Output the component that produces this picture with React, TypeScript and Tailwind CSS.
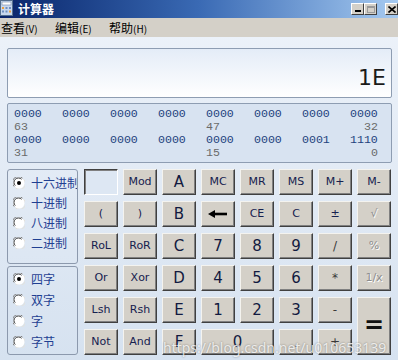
type Key = {
  label?: string;
  size?: "sm" | "lg" | "op";
  off?: boolean;
  span?: string;
  kind?: "blank" | "back";
};

const keys: Key[] = [
  { kind: "blank" },
  { label: "Mod" },
  { label: "A", size: "lg" },
  { label: "MC" },
  { label: "MR" },
  { label: "MS" },
  { label: "M+" },
  { label: "M-" },

  { label: "(" },
  { label: ")" },
  { label: "B", size: "lg" },
  { kind: "back" },
  { label: "CE" },
  { label: "C" },
  { label: "±" },
  { label: "√", off: true },

  { label: "RoL" },
  { label: "RoR" },
  { label: "C", size: "lg" },
  { label: "7", size: "lg" },
  { label: "8", size: "lg" },
  { label: "9", size: "lg" },
  { label: "/", size: "op" },
  { label: "%", off: true },

  { label: "Or" },
  { label: "Xor" },
  { label: "D", size: "lg" },
  { label: "4", size: "lg" },
  { label: "5", size: "lg" },
  { label: "6", size: "lg" },
  { label: "*", size: "op" },
  { label: "1/x", off: true },

  { label: "Lsh" },
  { label: "Rsh" },
  { label: "E", size: "lg" },
  { label: "1", size: "lg" },
  { label: "2", size: "lg" },
  { label: "3", size: "lg" },
  { label: "-", size: "op" },
  { label: "=", span: "row-span-2" },

  { label: "Not" },
  { label: "And" },
  { label: "F", size: "lg" },
  { label: "0", size: "lg", span: "col-span-2" },
  { label: ".", off: true, size: "lg" },
  { label: "+", size: "op" },
];

const bitRows = [
  { bits: ["0000", "0000", "0000", "0000", "0000", "0000", "0000", "0000"], hi: "63", mid: "47", lo: "32" },
  { bits: ["0000", "0000", "0000", "0000", "0000", "0000", "0001", "1110"], hi: "31", mid: "15", lo: "0" },
];

const Radio = ({ on }: { on?: boolean }) => (
  <svg width="12" height="12" viewBox="0 0 12 12" className="shrink-0">
    <circle cx="6" cy="6" r="5.5" fill="#ffffff" />
    <path d="M1.2 9.5 A5.2 5.2 0 0 1 9.5 1.2" stroke="#808080" strokeWidth="1" fill="none" />
    <path d="M2.3 8.6 A4 4 0 0 1 8.6 2.3" stroke="#404040" strokeWidth="1" fill="none" />
    <path d="M10.8 2.5 A5.2 5.2 0 0 1 2.5 10.8" stroke="#e4e1da" strokeWidth="1" fill="none" />
    {on && <circle cx="6" cy="6" r="2" fill="#000000" />}
  </svg>
);

const KeyButton = ({ k }: { k: Key }) => {
  if (k.kind === "blank") {
    return (
      <div className="border border-t-[#404040] border-l-[#404040] border-r-white border-b-white bg-[#dde7f3] shadow-[inset_1px_1px_0_#808080]" />
    );
  }
  let text = "text-[11px] text-[#16214f]";
  if (k.size === "lg") text = "text-[15px] text-[#121a40]";
  if (k.size === "op") text = "text-[12px] text-[#3a3a3a]";
  if (k.label === "=") text = "text-[24px] font-bold text-[#111111]";
  if (k.off) text = (k.size === "lg" ? "text-[15px]" : "text-[11px]") + " text-[#8e8e8e] [text-shadow:1px_1px_0_#ffffff]";
  return (
    <div
      className={
        "flex items-center justify-center bg-[#d4d0c8] border border-t-[#f4f3ef] border-l-[#f4f3ef] border-r-[#404040] border-b-[#404040] shadow-[inset_-1px_-1px_0_#808080] " +
        (k.span ?? "")
      }
    >
      {k.kind === "back" ? (
        <svg width="22" height="10" viewBox="0 0 22 10">
          <path d="M7 5 H20" stroke="#000" strokeWidth="2.6" />
          <path d="M1 5 L8 1 L8 9 Z" fill="#000" />
        </svg>
      ) : (
        <span className={text + (k.label === "=" ? " leading-none -mt-[2px]" : "")}>{k.label}</span>
      )}
    </div>
  );
};

const App = () => {
  return (
    <div className="relative w-[398px] h-[360px] overflow-hidden bg-gradient-to-b from-[#eef3fa] to-[#d6e2f0] font-['DejaVu_Sans',sans-serif]">
      {/* title bar */}
      <div className="h-[18px] flex items-center bg-gradient-to-r from-[#0a246a] via-[#3a6ab4] to-[#a6caf0]">
        <svg width="14" height="17" viewBox="0 0 14 17" className="self-start">
          <rect x="0.5" y="0.5" width="12" height="15" fill="#c8d8ee" stroke="#56708f" />
          <rect x="2" y="2" width="9" height="3" fill="#ffffff" stroke="#6f88a8" strokeWidth="0.6" />
          <rect x="2" y="7" width="2" height="2" fill="#e9a040" />
          <rect x="5.5" y="7" width="2" height="2" fill="#6f8fc0" />
          <rect x="9" y="7" width="2" height="2" fill="#6f8fc0" />
          <rect x="2" y="10.5" width="2" height="2" fill="#6f8fc0" />
          <rect x="5.5" y="10.5" width="2" height="2" fill="#6f8fc0" />
          <rect x="9" y="10.5" width="2" height="2" fill="#e9a040" />
        </svg>
        <span className="ml-[4px] text-white font-bold text-[12px] leading-none font-['Noto_Sans_CJK_SC',sans-serif]">计算器</span>
        <div className="ml-auto flex items-center self-start mt-[3px]">
          <div className="w-[13px] h-[12px] bg-[#d4d0c8] border border-t-white border-l-white border-r-[#404040] border-b-[#404040] flex items-end justify-center pb-[2px]">
            <div className="w-[6px] h-[2px] bg-black" />
          </div>
          <div className="w-[13px] h-[12px] bg-[#d4d0c8] border border-t-white border-l-white border-r-[#404040] border-b-[#404040] flex items-center justify-center">
            <div className="w-[8px] h-[7px] border border-[#9a9a9a] border-t-2" />
          </div>
          <div className="ml-[8px] w-[13px] h-[12px] bg-[#d4d0c8] border border-t-white border-l-white border-r-[#404040] border-b-[#404040] flex items-center justify-center">
            <svg width="8" height="7" viewBox="0 0 8 7">
              <path d="M0.5 0.5 L7.5 6.5 M7.5 0.5 L0.5 6.5" stroke="#000" strokeWidth="1.6" />
            </svg>
          </div>
        </div>
      </div>

      {/* menu bar */}
      <div className="h-[19px] bg-[#d4d0c8] flex items-center text-[12px] text-black font-['Noto_Sans_CJK_SC',sans-serif]">
        <span className="ml-[1px] w-[54px]">查看<span className="text-[10px]">(V)</span></span>
        <span className="w-[54px]">编辑<span className="text-[10px]">(E)</span></span>
        <span>帮助<span className="text-[10px]">(H)</span></span>
      </div>

      <div className="pl-[7px] pr-[6px] pt-[11px]">
        {/* display */}
        <div className="h-[50px] rounded-[2px] border border-[#8e9db2] bg-gradient-to-b from-[#e4ecf7] to-white flex items-end justify-end pr-[5px] pb-[8px]">
          <span className="text-[22px] leading-[22px] text-[#1a1a1a]">1E</span>
        </div>

        {/* bit panel */}
        <div className="mt-[5px] h-[60px] rounded-[2px] border border-[#8e9db2] bg-[#d8e3f1] pl-[6px] pt-[3px] font-['Liberation_Mono',monospace] text-[11.6px] leading-[13px]">
          {bitRows.map((r) => (
            <div key={r.hi}>
              <div className="grid grid-cols-[repeat(8,28px)] gap-x-[20px] text-[#23427e]">
                {r.bits.map((b, i) => (
                  <span key={i}>{b}</span>
                ))}
              </div>
              <div className="grid grid-cols-[repeat(8,28px)] gap-x-[20px] text-[#6a6a6a]">
                <span>{r.hi}</span>
                <span />
                <span />
                <span />
                <span>{r.mid}</span>
                <span />
                <span />
                <span className="text-right">{r.lo}</span>
              </div>
            </div>
          ))}
        </div>

        {/* controls */}
        <div className="mt-[6px] flex gap-[6px]">
          <div className="w-[71px] flex flex-col gap-[2px] font-['Noto_Sans_CJK_SC',sans-serif] text-[12px] text-[#1f3f92]">
            <div className="h-[95px] rounded-[3px] border border-[#8c99ad] pt-[3px] pl-[5px] overflow-hidden">
              {["十六进制", "十进制", "八进制", "二进制"].map((t, i) => (
                <div key={t} className="h-[20px] flex items-center gap-[6px] whitespace-nowrap">
                  <Radio on={i === 0} />
                  <span>{t}</span>
                </div>
              ))}
            </div>
            <div className="h-[89px] rounded-[3px] border border-[#8c99ad] pt-[1px] pl-[5px] overflow-hidden">
              {["四字", "双字", "字", "字节"].map((t, i) => (
                <div key={t} className="h-[21px] flex items-center gap-[6px] whitespace-nowrap">
                  <Radio on={i === 0} />
                  <span>{t}</span>
                </div>
              ))}
            </div>
          </div>

          <div className="grid grid-cols-[repeat(8,34px)] grid-rows-[repeat(6,26px)] gap-x-[5px] gap-y-[6px]">
            {keys.map((k, i) => (
              <KeyButton key={i} k={k} />
            ))}
          </div>
        </div>
      </div>

      {/* watermark */}
      <span className="absolute left-[163px] top-[337px] text-[14px] text-white/80 font-['Noto_Sans',sans-serif] [text-shadow:0_0_2px_rgba(0,0,0,0.45)]">
        https://blog.csdn.net/u010653139
      </span>
    </div>
  );
};

export default App;
